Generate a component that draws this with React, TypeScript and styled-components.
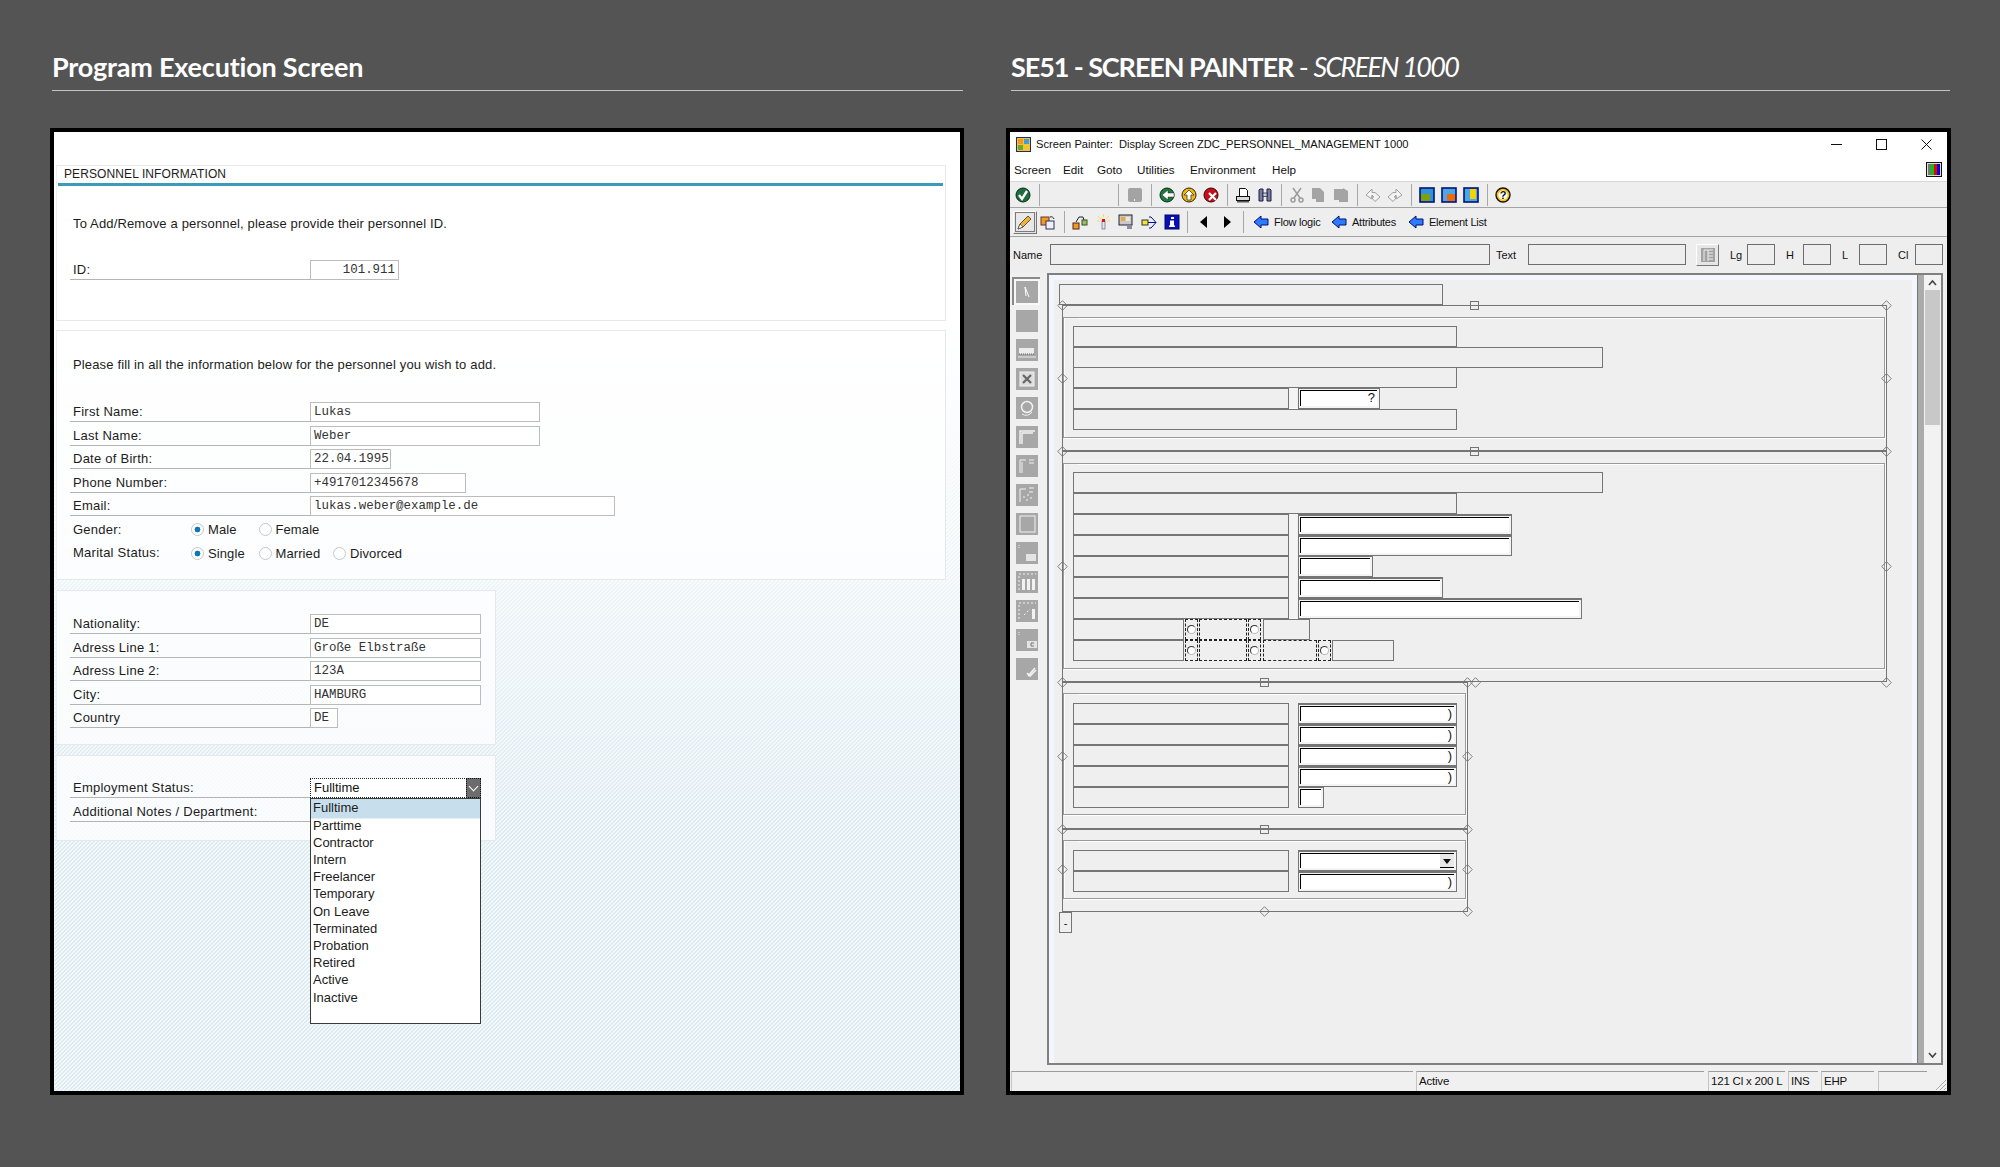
import React from 'react'
import styled, { createGlobalStyle } from 'styled-components'

const GlobalStyle = createGlobalStyle`
  * { box-sizing: border-box; }
  html, body { margin: 0; padding: 0; background: #545454; }
  body { width: 2000px; height: 1167px; overflow: hidden; font-family: "Liberation Sans", Arial, sans-serif; }
`

/* ---------- page ---------- */

const Page = styled.div`
  display: grid;
  grid-template-columns: 914px 945px;
  column-gap: 42px;
  padding-left: 50px;
  width: 2000px;
  height: 1167px;
`

const Column = styled.section`
  display: flex;
  flex-direction: column;
`

const Heading = styled.h1<{ $tight?: boolean }>`
  margin: 0 1px 0 ${p => (p.$tight ? 5 : 2)}px;
  height: 91px;
  padding-top: 49px;
  border-bottom: 1px solid #c4c4c4;
  color: #fff;
  font-family: Lato, "Open Sans", sans-serif;
  font-size: 27px;
  line-height: 36px;
  font-weight: 700;
  letter-spacing: ${p => (p.$tight ? -1.1 : -0.2)}px;
  white-space: nowrap;

  em, span {
    font-weight: 400;
  }
  em {
    letter-spacing: -1.7px;
  }
`

const Frame = styled.div`
  margin-top: 37px;
  height: 967px;
  border: 4px solid #000;
`

/* ---------- left: program execution ---------- */

const Execution = styled(Frame)`
  padding: 33px 0 0 2px;
  background:
    linear-gradient(to bottom, #fff 0%, #fff 20%, rgba(255, 255, 255, 0) 70%),
    linear-gradient(135deg, #dfebf2 25%, #f3f8fa 25%, #f3f8fa 50%, #dfebf2 50%, #dfebf2 75%, #f3f8fa 75%) 0 0 / 4px 4px;
  color: #1c1c1c;
  font-size: 13px;
`

const Group = styled.div<{ $w: number; $top: number; $bottom: number; $gap: number }>`
  width: ${p => p.$w}px;
  margin-bottom: ${p => p.$gap}px;
  padding: ${p => p.$top}px 0 ${p => p.$bottom}px 13px;
  background: rgba(255, 255, 255, 0.72);
  border: 1px solid #e6e9eb;
  border-left-color: #eef0f1;
`

const GroupTitle = styled.div`
  margin: -1px 0 0 -12px;
  width: 885px;
  height: 21px;
  padding: 2px 0 0 6px;
  border-bottom: 3px solid #3a9cb9;
  font-size: 12px;
  line-height: 15px;
  letter-spacing: 0.1px;
`

const Instruction = styled.p<{ $before: number; $after: number }>`
  margin: ${p => p.$before}px 0 ${p => p.$after}px 3px;
  height: 16px;
  font-size: 13px;
  line-height: 16px;
  letter-spacing: 0.15px;
`

const Rows = styled.div`
  display: flex;
  flex-direction: column;
  row-gap: 3.55px;
`

const Row = styled.div`
  position: relative;
  display: flex;
  height: 20px;
`

const Label = styled.label`
  flex: 0 0 240px;
  padding: 2px 0 0 3px;
  border-bottom: 1px solid #b4b4b4;
  font-size: 13px;
  line-height: 16px;
  letter-spacing: 0.25px;
`

const Field = styled.div<{ $w: number; $right?: boolean }>`
  width: ${p => p.$w}px;
  height: 20px;
  padding: 0 3px;
  border: 1px solid #bcbcbc;
  background: #fff;
  color: #333;
  font-family: "Liberation Mono", "Courier New", monospace;
  font-size: 12.45px;
  line-height: 18px;
  text-align: ${p => (p.$right ? 'right' : 'left')};
  white-space: nowrap;
`

const RadioLabel = styled.span`
  flex: 0 0 121px;
  padding: 2px 0 0 3px;
  font-size: 13px;
  line-height: 16px;
  letter-spacing: 0.25px;
`

const RadioOption = styled.span<{ $w: number }>`
  display: flex;
  align-items: center;
  flex: 0 0 ${p => p.$w}px;
  font-size: 13px;
  letter-spacing: 0.1px;
`

const RadioDot = styled.i<{ $on?: boolean }>`
  flex: none;
  width: 13px;
  height: 13px;
  margin-right: 4px;
  border: 1.5px solid #c4c8ca;
  border-radius: 50%;
  background: ${p =>
    p.$on ? 'radial-gradient(circle, #0a78b8 0 2.6px, #fff 3.2px)' : '#fff'};
`

const Select = styled.div`
  position: relative;
  width: 171px;
  height: 20px;
  padding-left: 3px;
  border: 1px dotted #222;
  background: #fff;
  color: #111;
  font-size: 13px;
  line-height: 18px;
`

const SelectButton = styled.i`
  position: absolute;
  top: -1px;
  right: -1px;
  width: 15px;
  height: 20px;
  border: 1px dotted #111;
  background: #6c6c6c;

  &::after {
    content: '';
    position: absolute;
    left: 3px;
    top: 4px;
    width: 6px;
    height: 6px;
    border-right: 1px solid #fff;
    border-bottom: 1px solid #fff;
    transform: rotate(45deg);
  }
`

const ListBox = styled.ul`
  position: absolute;
  z-index: 2;
  top: 19px;
  left: -1px;
  width: 171px;
  height: 226px;
  margin: 0;
  padding: 0;
  list-style: none;
  border: 1px solid #3a3a3a;
  background: #fff;
`

const ListItem = styled.li<{ $active?: boolean }>`
  height: 17.2px;
  padding-left: 2px;
  color: #1c1c1c;
  font-size: 13px;
  line-height: 17px;
  background: ${p => (p.$active ? '#c7dfec' : 'transparent')};
  box-shadow: ${p => (p.$active ? '0 1.5px 0 #c7dfec' : 'none')};
`

const statuses = [
  'Fulltime', 'Parttime', 'Contractor', 'Intern', 'Freelancer', 'Temporary', 'On Leave',
  'Terminated', 'Probation', 'Retired', 'Active', 'Inactive',
]

const FormRow = ({ label, w, value, right }: { label: string; w: number; value: string; right?: boolean }) => (
  <Row>
    <Label>{label}</Label>
    <Field $w={w} $right={right}>{value}</Field>
  </Row>
)

const ProgramExecution = () => (
  <Execution>
    <Group $w={890} $top={0} $bottom={40} $gap={9}>
      <GroupTitle>PERSONNEL INFORMATION</GroupTitle>
      <Instruction $before={30} $after={28}>To Add/Remove a personnel, please provide their personnel ID.</Instruction>
      <FormRow label="ID:" w={89} value="101.911" right />
    </Group>
    <Group $w={890} $top={26} $bottom={16} $gap={10}>
      <Instruction $before={0} $after={29}>Please fill in all the information below for the personnel you wish to add.</Instruction>
      <Rows>
        <FormRow label="First Name:" w={230} value="Lukas" />
        <FormRow label="Last Name:" w={230} value="Weber" />
        <FormRow label="Date of Birth:" w={81} value="22.04.1995" />
        <FormRow label="Phone Number:" w={156} value="+4917012345678" />
        <FormRow label="Email:" w={305} value="lukas.weber@example.de" />
        <Row>
          <RadioLabel>Gender:</RadioLabel>
          <RadioOption $w={67.5}><RadioDot $on />Male</RadioOption>
          <RadioOption $w={74.5}><RadioDot />Female</RadioOption>
        </Row>
        <Row>
          <RadioLabel>Marital Status:</RadioLabel>
          <RadioOption $w={67.5}><RadioDot $on />Single</RadioOption>
          <RadioOption $w={74.5}><RadioDot />Married</RadioOption>
          <RadioOption $w={80}><RadioDot />Divorced</RadioOption>
        </Row>
      </Rows>
    </Group>
    <Group $w={440} $top={23} $bottom={16} $gap={10}>
      <Rows>
        <FormRow label="Nationality:" w={171} value="DE" />
        <FormRow label="Adress Line 1:" w={171} value="Große Elbstraße" />
        <FormRow label="Adress Line 2:" w={171} value="123A" />
        <FormRow label="City:" w={171} value="HAMBURG" />
        <FormRow label="Country" w={28} value="DE" />
      </Rows>
    </Group>
    <Group $w={440} $top={22} $bottom={18} $gap={0}>
      <Rows>
        <Row>
          <Label>Employment Status:</Label>
          <Select>
            Fulltime
            <SelectButton />
            <ListBox>
              {statuses.map((s, i) => (
                <ListItem key={s} $active={i === 0}>{s}</ListItem>
              ))}
            </ListBox>
          </Select>
        </Row>
        <Row>
          <Label>Additional Notes / Department:</Label>
        </Row>
      </Rows>
    </Group>
  </Execution>
)

/* ---------- icons ---------- */

const glyphs: Record<string, React.ReactNode> = {
  ok: (<><circle cx="8" cy="8" r="7" fill="#1f6c3d" stroke="#0b2c18" /><path d="M4 8l3 4 5-8" fill="none" stroke="#fff" strokeWidth="2.4" /></>),
  save: (<><rect x="1" y="1" width="14" height="14" rx="2" fill="#a3a3a3" /><rect x="7" y="12" width="1" height="2" fill="#eee" /></>),
  back: (<><circle cx="8" cy="8" r="7" fill="#1f7a3c" stroke="#0b2c18" /><path d="M3 8l6-5v3h6v4H9v3z" fill="#fff" stroke="#222" strokeWidth=".5" /></>),
  up: (<><circle cx="8" cy="8" r="7" fill="#f6b900" stroke="#222" /><path d="M8 3l5 5h-3v5H6V8H3z" fill="#fff" stroke="#222" strokeWidth=".7" /></>),
  cancel: (<><circle cx="8" cy="8" r="7" fill="#c70f1c" stroke="#2a0508" /><path d="M6 6l7 7M13 6l-7 7" stroke="#fff" strokeWidth="2.2" /></>),
  print: (<><path d="M4.5 10V1.5h6l2 2V10" fill="#fff" stroke="#111" /><rect x="1.5" y="9.5" width="13" height="4" fill="#d9d9d9" stroke="#111" /><rect x="2" y="14" width="12" height="1.5" fill="#555" /></>),
  find: (<><path d="M2 14V3l1-1h3v12zM10 14V2h3l1 1v11z" fill="#7a7aa6" stroke="#1c1c3a" /><rect x="6" y="6" width="4" height="3.5" fill="#c8c8dc" stroke="#1c1c3a" strokeWidth=".7" /></>),
  cut: (<g fill="none" stroke="#9c9c9c" strokeWidth="1.5"><path d="M4 1l7 10M12 1L5 11" /><circle cx="4" cy="13" r="2" /><circle cx="12" cy="13" r="2" /></g>),
  copy: (<path d="M1 1h8l4 4v10H5V12H1z" fill="#a4a4a4" />),
  paste: (<path d="M1 2h9V1l5 3v11H6v-2H1z" fill="#a4a4a4" />),
  undo: (<path d="M1 8l6-6v3.5l3 0 5 4.5-5 4.5-4-4.5h3L7 8v4z" fill="#f4f4f4" stroke="#a0a0a0" />),
  redo: (<path d="M15 8L9 2v3.5H6L1 10l5 4.5L10 10H7l2-2v4z" fill="#f4f4f4" stroke="#a0a0a0" />),
  win1: (<><rect x="1" y="1" width="14" height="14" fill="#2f93d8" stroke="#00127a" strokeWidth="1.6" /><rect x="2" y="7" width="9" height="7" fill="#7f9e12" /></>),
  win2: (<><rect x="1" y="1" width="14" height="14" fill="#4ea6e4" stroke="#00127a" strokeWidth="1.6" /><rect x="6" y="7" width="8" height="7" fill="#ee6a08" /></>),
  win3: (<><rect x="1" y="1" width="14" height="14" fill="#4ea6e4" stroke="#00127a" strokeWidth="1.6" /><rect x="7" y="2" width="6" height="10" fill="#f4d400" /></>),
  help: (<><circle cx="8" cy="8" r="7" fill="#ffc107" stroke="#111" strokeWidth="1.4" /><circle cx="8" cy="8" r="4.6" fill="#fff" /><text x="8" y="12" textAnchor="middle" fontSize="11" fontWeight="700" fontFamily="Liberation Sans" fill="#111">?</text></>),
  pencil: (<><rect x="-1.5" y="-1.5" width="19" height="19" fill="#e8e8e8" stroke="#111" strokeDasharray="1 1" /><path d="M1 15l2-5 8-8 3 3-8 8z" fill="#f2b233" stroke="#333" strokeWidth=".8" /><path d="M1 15l2-5 3 3z" fill="#fff" stroke="#333" strokeWidth=".6" /></>),
  copyobj: (<><rect x="1" y="3" width="8" height="8" fill="#f09a22" stroke="#633" /><rect x="6" y="7" width="8" height="8" fill="#eef" stroke="#335" /><path d="M10 3a3 3 0 0 1 4 2" fill="none" stroke="#222" /></>),
  nodes: (<><rect x="1" y="9" width="6" height="6" fill="#f09a22" stroke="#522" /><rect x="10" y="6" width="5" height="5" fill="#9fbb5a" stroke="#353" /><path d="M4 8l3-5h4l1 3" fill="none" stroke="#222" /></>),
  wand: (<><rect x="7" y="7" width="3" height="8" fill="#dfe8f2" stroke="#667" strokeWidth=".7" /><rect x="7" y="5" width="3" height="3" fill="#e01020" /><path d="M8.5 0v3M3 2l3 3M14 2l-3 3M2 7h3M12 7h3" stroke="#f5e040" /></>),
  list: (<><rect x="1" y="1" width="13" height="10" fill="#c9c9c9" stroke="#223" /><rect x="3" y="3" width="4" height="4" fill="#f0a83a" /><rect x="8" y="3" width="4" height="4" fill="#e8e8e8" /><rect x="9" y="12" width="5" height="3" fill="#8a8aa0" /></>),
  flow: (<><rect x="1" y="6" width="6" height="5" fill="#f5e23a" stroke="#333" /><path d="M7 8.5h8M10 3l5 5.5-5 5.5M8 3h2M8 14h2" fill="none" stroke="#00128a" /></>),
  info: (<><rect x="1" y="1" width="14" height="14" fill="#0a10b8" stroke="#00085c" /><rect x="7" y="3" width="3" height="2" fill="#fff" /><rect x="6" y="6.5" width="4" height="6" fill="#fff" /><rect x="5" y="11.5" width="6" height="1.5" fill="#fff" /></>),
  left: (<path d="M11 2v12L4 8z" fill="#000" />),
  right: (<path d="M5 2v12l7-6z" fill="#000" />),
  arrow: (<path d="M1 8l7-6v3h7v6H8v3z" fill="#2f7bff" stroke="#00106e" />),
}

const IconSvg = styled.svg`
  display: block;
  overflow: visible;
`

const Icon = ({ name }: { name: string }) => (
  <IconSvg width="16" height="16" viewBox="0 0 16 16">{glyphs[name]}</IconSvg>
)

const palette: React.ReactNode[] = [
  <path d="M9 6l4 10M9 6l1 9" stroke="#fff" fill="none" />,
  null,
  <><path d="M3 9h15v6H3z" fill="#ececec" /><path d="M3 15h15" stroke="#666" strokeDasharray="1 1" /><path d="M2 18h18" stroke="#eee" /></>,
  <><rect x="4" y="4" width="14" height="14" fill="#dcdcdc" stroke="#f2f2f2" /><path d="M7 7l8 8M15 7l-8 8" stroke="#666" strokeWidth="2.2" /></>,
  <><circle cx="11" cy="10" r="5.5" fill="none" stroke="#f2f2f2" strokeWidth="1.5" /><path d="M6 17a7 7 0 0 0 10-2" stroke="#f2f2f2" fill="none" /></>,
  <path d="M4 18V5h15M6 18V7h11" stroke="#f2f2f2" fill="none" strokeWidth="1.4" />,
  <path d="M4 18V5h6M13 5h5M13 8h5M6 18V7" stroke="#f2f2f2" fill="none" />,
  <path d="M4 18V5h6M13 4h5M13 8h4M7 13h2M11 11h2M10 16h2M14 14h2" stroke="#f2f2f2" fill="none" />,
  <rect x="4" y="3" width="15" height="16" fill="none" stroke="#f2f2f2" />,
  <><rect x="10" y="12" width="10" height="7" fill="#e4e4e4" /><path d="M3 3v3" stroke="#eee" strokeDasharray="1 1" /></>,
  <><path d="M3 3h17M3 5v14" stroke="#f2f2f2" strokeDasharray="2 2" /><rect x="6" y="8" width="3" height="11" fill="#f2f2f2" /><rect x="11" y="8" width="3" height="11" fill="#f2f2f2" /><rect x="16" y="8" width="3" height="11" fill="#f2f2f2" /></>,
  <><path d="M3 3h17M3 5v14M8 15l6-6" stroke="#f2f2f2" strokeDasharray="2 2" /><rect x="16" y="9" width="3" height="10" fill="#f2f2f2" /></>,
  <><rect x="11" y="12" width="10" height="7" fill="#e4e4e4" /><path d="M18 14h-3v3h3" stroke="#777" fill="none" /><path d="M3 3v3" stroke="#eee" strokeDasharray="1 1" /></>,
  <path d="M11 15l3 3 6-6M12 18l7-8" stroke="#f2f2f2" fill="none" strokeWidth="1.6" />,
]

/* ---------- right: screen painter ---------- */

const Painter = styled(Frame)`
  display: flex;
  flex-direction: column;
  background: #f0f0f0;
  color: #111;
`

const TitleBar = styled.header`
  display: flex;
  align-items: center;
  flex: 0 0 28px;
  padding: 0 0 4px 6px;
  background: #fff;
  font-size: 11.15px;
`

const AppIcon = styled.svg`
  flex: none;
  margin-right: 5px;
`

const TitleText = styled.span`
  flex: 1;
  white-space: pre;
`

const WindowControls = styled.div`
  display: flex;
  align-items: center;
  column-gap: 34px;
  padding-right: 15px;
`

const MenuBar = styled.nav`
  display: flex;
  align-items: center;
  flex: 0 0 22px;
  padding: 0 5px 2px 4px;
  background: #fff;
  border-bottom: 1px solid #d8d8d8;
  font-size: 11.7px;
`

const MenuItem = styled.span<{ $w: number }>`
  flex: 0 0 ${p => p.$w}px;
`

const Monitor = styled.svg`
  margin-left: auto;
`

const Toolbar = styled.div<{ $h: number; $pad: number }>`
  display: flex;
  align-items: center;
  flex: 0 0 ${p => p.$h}px;
  padding-left: ${p => p.$pad}px;
  background: #eee;
  border-bottom: 1px solid #a3a3a3;
`

const Tool = styled.span<{ $selected?: boolean; $w?: number }>`
  display: flex;
  align-items: center;
  justify-content: center;
  flex: 0 0 ${p => p.$w ?? (p.$selected ? 24 : 22)}px;
  height: ${p => (p.$selected ? 23 : 22)}px;
  ${p => p.$selected && `
    border: 1px solid #fff;
    border-right-color: #777;
    border-bottom-color: #777;
    background: #e4e4e4;
  `}
`

const ToolSep = styled.i<{ $w?: number; $end?: boolean }>`
  flex: 0 0 ${p => p.$w ?? 10}px;
  height: 22px;
  background: linear-gradient(#a8a8a8, #a8a8a8) ${p => (p.$end ? 'right 5px center' : 'center')} / 1px 100% no-repeat;
`

const ToolLink = styled.span<{ $w: number; $pad?: number }>`
  display: flex;
  align-items: center;
  column-gap: 5px;
  flex: 0 0 ${p => p.$w}px;
  padding-left: ${p => p.$pad ?? 0}px;
  font-size: 11px;
  letter-spacing: -0.25px;
  white-space: nowrap;
`

const AttrRow = styled.div`
  display: flex;
  align-items: center;
  flex: 0 0 36px;
  padding: 0 0 1px 3px;
  background: #eee;
  font-size: 11px;
`

const AttrLabel = styled.span<{ $w: number; $pad?: number }>`
  flex: 0 0 ${p => p.$w}px;
  padding-left: ${p => p.$pad ?? 0}px;
`

const AttrInput = styled.i<{ $w: number }>`
  flex: 0 0 ${p => p.$w}px;
  height: 21px;
  border: 1px solid #6e6e6e;
`

const AttrButton = styled.i`
  display: flex;
  align-items: center;
  justify-content: center;
  flex: 0 0 23px;
  height: 22px;
  margin: 0 11px 0 10px;
  border: 1px solid #fff;
  border-right-color: #777;
  border-bottom-color: #777;
  background: #e6e6e6;
`

const Workspace = styled.div`
  display: flex;
  flex: 0 0 792px;
  padding: 0 4px 0 4px;
  background: #f0f0f0;
`

const Palette = styled.div`
  flex: 0 0 33px;
  padding-top: 4.5px;
`

const PaletteSlot = styled.div<{ $active?: boolean }>`
  display: flex;
  align-items: center;
  justify-content: center;
  width: 26px;
  height: 29px;

  svg {
    background: #a7a7a7;
    ${p => p.$active && 'outline: 2px solid #f8f8f8; outline-offset: 0; box-shadow: -1px -1px 0 3px #8a8a8a;'}
  }
`

const CanvasFrame = styled.div`
  display: flex;
  flex: 1;
  border: 2px solid #808080;
`

const Canvas = styled.div`
  position: relative;
  flex: 1;
  background: #efefef;
  box-shadow: inset 5px 5px 0 #f3f7fd, inset -5px 0 0 #f3f7fd;
`

const SideBar = styled.div`
  flex: 0 0 7px;
  background: #ababab;
  border-left: 1px solid #777;
`

const Scroll = styled.div`
  display: flex;
  flex-direction: column;
  flex: 0 0 17px;
  padding: 0 1px;
  background: #f2f2f2;
  color: #444;
`

const ScrollEnd = styled.div`
  display: flex;
  align-items: center;
  justify-content: center;
  flex: 0 0 15px;
`

const ScrollTrack = styled.div`
  flex: 1;
`

const ScrollThumb = styled.div`
  height: 135px;
  background: #c8c8c8;
`

const StatusBar = styled.footer`
  display: flex;
  padding: 6px 0 0 1px;
  height: 27px;
  position: relative;
  font-size: 11.5px;
  letter-spacing: -0.2px;
`

const StatusCell = styled.div<{ $w: number; $mr?: number }>`
  flex: 0 0 ${p => p.$w}px;
  margin-right: ${p => p.$mr ?? 3}px;
  padding: 3px 0 0 2px;
  border-top: 1px solid #9c9c9c;
  border-left: 1px solid #c4c4c4;
  white-space: nowrap;
`

const Grip = styled.svg`
  position: absolute;
  right: 0;
  bottom: 0;
`

/* free canvas of the screen painter: every element sits where the layout put it */

const OX = 1049
const OY = 275

type Box = { $x: number; $y: number; $x2: number; $y2: number }

const placed = (p: Box) => ({
  style: { left: p.$x - OX, top: p.$y - OY, width: p.$x2 - p.$x, height: p.$y2 - p.$y },
})

const FrameBox = styled.div.attrs<Box>(placed)<Box>`
  position: absolute;
  border: 1px solid #9a9a9a;
  box-shadow: inset 1px 1px 0 #fff, 1px 1px 0 #fff;

  &::before {
    content: '';
    position: absolute;
    top: 0;
    left: 1px;
    width: 13px;
    height: 1px;
    background: #f4f4f4;
  }
`

const TextBox = styled.div.attrs<Box>(placed)<Box>`
  position: absolute;
  display: flex;
  align-items: center;
  justify-content: center;
  border: 1px solid #757575;
  background: #efefef;
  font-size: 11px;
`

const Gutter = styled.div.attrs<Box>(placed)<Box>`
  position: absolute;
  background: #f4f4f4;
  box-shadow: inset 0 -1px 0 #fff;
`

const Well = styled.div.attrs<Box>(placed)<Box & { $heavy?: boolean }>`
  position: absolute;
  padding: 1px;
  border: 1px solid #757575;
  ${p => p.$heavy && 'border-top: 2px solid #757575;'}
  background: #f4f4f4;
  font-size: 11px;

  &::before {
    content: '';
    position: absolute;
    inset: 1px 2px 2px 1px;
    background: #fff;
    border-top: 1px solid #000;
    border-left: 1px solid #000;
  }
`

const WellMark = styled.span`
  position: absolute;
  right: 4px;
  top: 1px;
  color: #111;
  font-size: 13px;
  line-height: 15px;
`

const WellDrop = styled.span`
  position: absolute;
  right: 2px;
  top: 2px;
  width: 14px;
  height: 14px;
  background: #e8e8e8;
  border-bottom: 1px solid #000;

  &::after {
    content: '';
    position: absolute;
    left: 3px;
    top: 5px;
    border: 4px solid transparent;
    border-top: 5px solid #111;
    border-bottom: 0;
  }
`

const Dashed = styled.div.attrs<Box>(placed)<Box>`
  position: absolute;
  display: flex;
  align-items: center;
  justify-content: center;
  border: 1px dashed #222;
`

const RadioMark = styled.i`
  flex: none;
  width: 9px;
  height: 9px;
  border: 1px solid #333;
  border-right-color: #bbb;
  border-bottom-color: #bbb;
  border-radius: 50%;
  background: #fff;
`

const Line = styled.div.attrs<Box>(placed)<Box & { $color?: string }>`
  position: absolute;
  background: ${p => p.$color ?? '#757575'};
`

const Handle = styled.i.attrs<{ $cx: number; $cy: number }>(p => ({
  style: { left: p.$cx - OX - 4.5, top: p.$cy - OY - 4.5 },
}))<{ $cx: number; $cy: number; $square?: boolean }>`
  position: absolute;
  width: 9px;
  height: 9px;
  border: 1px solid #757575;
  ${p => !p.$square && 'transform: rotate(45deg) scale(.85);'}
`

const label = (x: number, y: number, x2: number) => <TextBox key={`l${x}-${y}`} $x={x} $y={y} $x2={x2} $y2={y + 21} />

const well = (y: number, x2: number, mark?: React.ReactNode, heavy?: boolean) => (
  <Well key={`w${y}`} $x={1298} $y={y} $x2={x2} $y2={y + 21} $heavy={heavy}>{mark}</Well>
)

const CanvasContent = () => (
  <>
    <TextBox $x={1059} $y={284} $x2={1443} $y2={305} />

    <FrameBox $x={1063} $y={317} $x2={1885} $y2={438} />
    {label(1073, 326, 1457)}
    {label(1073, 347, 1603)}
    {label(1073, 367, 1457)}
    {label(1073, 388, 1289)}
    {label(1073, 409, 1457)}
    <Gutter $x={1289} $y={388} $x2={1297} $y2={409} />
    {well(388, 1380, <WellMark>?</WellMark>)}

    <FrameBox $x={1063} $y={463} $x2={1885} $y2={669} />
    {label(1073, 472, 1603)}
    {label(1073, 493, 1457)}
    {[514, 535, 556, 577, 598].map(y => label(1073, y, 1289))}
    <Gutter $x={1289} $y={514} $x2={1297} $y2={619} />
    {well(514, 1512, null, true)}
    {well(535, 1512, null, true)}
    {well(556, 1373)}
    {well(577, 1443, null, true)}
    {well(598, 1582, null, true)}
    {label(1073, 619, 1184)}
    {label(1073, 640, 1184)}
    {[619, 640].map(y => (
      <React.Fragment key={y}>
        <Dashed $x={1185} $y={y} $x2={1198} $y2={y + 21}><RadioMark /></Dashed>
        <Dashed $x={1199} $y={y} $x2={1247} $y2={y + 21} />
        <Dashed $x={1248} $y={y} $x2={1261} $y2={y + 21}><RadioMark /></Dashed>
      </React.Fragment>
    ))}
    {label(1263, 619, 1310)}
    <Dashed $x={1263} $y={640} $x2={1317} $y2={661} />
    <Dashed $x={1318} $y={640} $x2={1331} $y2={661}><RadioMark /></Dashed>
    {label(1332, 640, 1394)}

    <FrameBox $x={1063} $y={693} $x2={1466} $y2={815} />
    {[703, 724, 745, 766, 787].map(y => label(1073, y, 1289))}
    {[703, 724, 745, 766].map(y => well(y, 1457, <WellMark>)</WellMark>, true))}
    {well(787, 1324)}

    <FrameBox $x={1063} $y={840} $x2={1466} $y2={899} />
    {label(1073, 850, 1289)}
    {label(1073, 871, 1289)}
    {well(850, 1457, <WellDrop />, true)}
    {well(871, 1457, <WellMark>)</WellMark>, true)}

    <Line $x={1062} $y={305} $x2={1887} $y2={306} />
    <Line $x={1062} $y={304} $x2={1443} $y2={306} />
    <Line $x={1062} $y={450} $x2={1887} $y2={452} />
    <Line $x={1062} $y={681} $x2={1467} $y2={683} />
    <Line $x={1467} $y={681} $x2={1887} $y2={682} />
    <Line $x={1062} $y={828} $x2={1468} $y2={830} />
    <Line $x={1062} $y={911} $x2={1468} $y2={912} />
    <Line $x={1062} $y={305} $x2={1063} $y2={912} />
    <Line $x={1886} $y={305} $x2={1887} $y2={682} />
    <Line $x={1467} $y={681} $x2={1468} $y2={912} />

    {[305, 378, 451, 566, 682, 756, 829, 869].map(y => <Handle key={y} $cx={1062} $cy={y} />)}
    {[305, 378, 451, 566, 682].map(y => <Handle key={y} $cx={1886} $cy={y} />)}
    {[682, 756, 829, 869, 911].map(y => <Handle key={y} $cx={1467} $cy={y} />)}
    <Handle $cx={1475} $cy={682} />
    <Handle $cx={1264} $cy={911} />
    <Handle $cx={1474} $cy={305} $square />
    <Handle $cx={1474} $cy={451} $square />
    <Handle $cx={1264} $cy={682} $square />
    <Handle $cx={1264} $cy={829} $square />

    <TextBox $x={1059} $y={912} $x2={1072} $y2={933}>-</TextBox>
  </>
)

const ScreenPainter = () => (
  <Painter>
    <TitleBar>
      <AppIcon width="15" height="15" viewBox="0 0 15 15">
        <rect x=".5" y=".5" width="14" height="14" fill="#f4c430" stroke="#1c2a7a" />
        <rect x="2" y="2" width="5" height="5" fill="#f09a22" />
        <rect x="8" y="2" width="5" height="5" fill="#3f9ce0" />
        <rect x="2" y="8" width="5" height="5" fill="#6fa82a" />
      </AppIcon>
      <TitleText>Screen Painter:  Display Screen ZDC_PERSONNEL_MANAGEMENT 1000</TitleText>
      <WindowControls>
        <svg width="11" height="11" viewBox="0 0 11 11"><path d="M0 5.5h11" stroke="#111" /></svg>
        <svg width="11" height="11" viewBox="0 0 11 11"><rect x=".5" y=".5" width="10" height="10" fill="none" stroke="#111" /></svg>
        <svg width="11" height="11" viewBox="0 0 11 11"><path d="M.5.5l10 10M10.5.5l-10 10" stroke="#111" /></svg>
      </WindowControls>
    </TitleBar>
    <MenuBar>
      <MenuItem $w={49}>Screen</MenuItem>
      <MenuItem $w={34}>Edit</MenuItem>
      <MenuItem $w={40}>Goto</MenuItem>
      <MenuItem $w={53}>Utilities</MenuItem>
      <MenuItem $w={82}>Environment</MenuItem>
      <MenuItem $w={40}>Help</MenuItem>
      <Monitor width="16" height="16" viewBox="0 0 16 16">
        <rect x=".5" y=".5" width="15" height="14" fill="#ddd" stroke="#111" />
        <rect x="2" y="2" width="3" height="11" fill="#777" />
        <rect x="5" y="2" width="3" height="11" fill="#0c0" />
        <rect x="8" y="2" width="3" height="11" fill="#e00" />
        <rect x="11" y="2" width="3" height="11" fill="#00d" />
      </Monitor>
    </MenuBar>
    <Toolbar $h={26} $pad={2}>
      <Tool><Icon name="ok" /></Tool>
      <ToolSep />
      <ToolSep $w={80} $end />
      <Tool><Icon name="save" /></Tool>
      <ToolSep />
      <Tool><Icon name="back" /></Tool>
      <Tool><Icon name="up" /></Tool>
      <Tool><Icon name="cancel" /></Tool>
      <ToolSep />
      <Tool><Icon name="print" /></Tool>
      <Tool><Icon name="find" /></Tool>
      <ToolSep />
      <Tool><Icon name="cut" /></Tool>
      <Tool><Icon name="copy" /></Tool>
      <Tool><Icon name="paste" /></Tool>
      <ToolSep />
      <Tool><Icon name="undo" /></Tool>
      <Tool><Icon name="redo" /></Tool>
      <ToolSep />
      <Tool><Icon name="win1" /></Tool>
      <Tool><Icon name="win2" /></Tool>
      <Tool><Icon name="win3" /></Tool>
      <ToolSep />
      <Tool><Icon name="help" /></Tool>
    </Toolbar>
    <Toolbar $h={29} $pad={3}>
      <Tool $selected><Icon name="pencil" /></Tool>
      <Tool><Icon name="copyobj" /></Tool>
      <ToolSep />
      <Tool $w={22.8}><Icon name="nodes" /></Tool>
      <Tool $w={22.8}><Icon name="wand" /></Tool>
      <Tool $w={22.8}><Icon name="list" /></Tool>
      <Tool $w={22.8}><Icon name="flow" /></Tool>
      <Tool $w={22.8}><Icon name="info" /></Tool>
      <ToolSep $w={10} />
      <Tool $w={23}><Icon name="left" /></Tool>
      <Tool $w={23}><Icon name="right" /></Tool>
      <ToolSep />
      <ToolLink $w={82} $pad={4}><Icon name="arrow" />Flow logic</ToolLink>
      <ToolLink $w={77}><Icon name="arrow" />Attributes</ToolLink>
      <ToolLink $w={80}><Icon name="arrow" />Element List</ToolLink>
    </Toolbar>
    <AttrRow>
      <AttrLabel $w={37}>Name</AttrLabel>
      <AttrInput $w={440} />
      <AttrLabel $w={38} $pad={6}>Text</AttrLabel>
      <AttrInput $w={158} />
      <AttrButton>
        <svg width="16" height="16" viewBox="0 0 16 16">
          <rect x="1" y="1" width="14" height="14" fill="#a2a2a2" />
          <path d="M4 3h9M4 3v11M8 3v11M8 6h5M8 9h5M8 12h5" stroke="#efefef" fill="none" />
        </svg>
      </AttrButton>
      <AttrLabel $w={17}>Lg</AttrLabel>
      <AttrInput $w={28} />
      <AttrLabel $w={28} $pad={11}>H</AttrLabel>
      <AttrInput $w={28} />
      <AttrLabel $w={28} $pad={11}>L</AttrLabel>
      <AttrInput $w={28} />
      <AttrLabel $w={28} $pad={11}>Cl</AttrLabel>
      <AttrInput $w={28} />
    </AttrRow>
    <Workspace>
      <Palette>
        {palette.map((g, i) => (
          <PaletteSlot key={i} $active={i === 0}>
            <svg width="22" height="22" viewBox="0 0 22 22">{g}</svg>
          </PaletteSlot>
        ))}
      </Palette>
      <CanvasFrame>
        <Canvas><CanvasContent /></Canvas>
        <SideBar />
        <Scroll>
          <ScrollEnd>
            <svg width="9" height="7" viewBox="0 0 9 7"><path d="M1 6l3.5-4L8 6" fill="none" stroke="#444" strokeWidth="1.6" /></svg>
          </ScrollEnd>
          <ScrollTrack><ScrollThumb /></ScrollTrack>
          <ScrollEnd>
            <svg width="9" height="7" viewBox="0 0 9 7"><path d="M1 1l3.5 4L8 1" fill="none" stroke="#444" strokeWidth="1.6" /></svg>
          </ScrollEnd>
        </Scroll>
      </CanvasFrame>
    </Workspace>
    <StatusBar>
      <StatusCell $w={402} />
      <StatusCell $w={288} $mr={4}>Active</StatusCell>
      <StatusCell $w={77} $mr={3}>121 Cl x 200 L</StatusCell>
      <StatusCell $w={30} $mr={3}>INS</StatusCell>
      <StatusCell $w={53} $mr={4}>EHP</StatusCell>
      <StatusCell $w={49} />
      <Grip width="14" height="14" viewBox="0 0 14 14">
        <path d="M13 3L3 13M13 7l-6 6M13 11l-2 2" stroke="#aaa" />
      </Grip>
    </StatusBar>
  </Painter>
)

const App = () => (
  <>
    <GlobalStyle />
    <Page>
      <Column>
        <Heading>Program Execution Screen</Heading>
        <ProgramExecution />
      </Column>
      <Column>
        <Heading $tight>SE51 - SCREEN PAINTER <span>- </span><em>SCREEN 1000</em></Heading>
        <ScreenPainter />
      </Column>
    </Page>
  </>
)

export default App
